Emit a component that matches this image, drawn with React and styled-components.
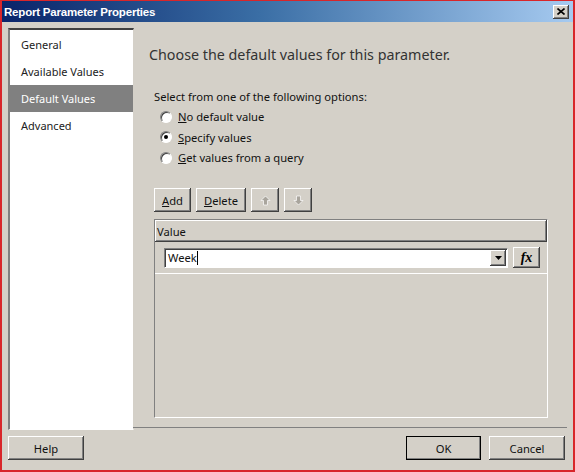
import React from 'react';
import styled, { createGlobalStyle } from 'styled-components';

const Global = createGlobalStyle`
    html, body { margin: 0; padding: 0; background: #d4d0c8; }
    body { font-family: "Noto Sans", "Open Sans", sans-serif; }
`

const Window = styled.div`
    box-sizing: border-box;
    width: 575px;
    height: 472px;
    border: 1px solid #d8262a;
    border-left-width: 2px;
    border-bottom-width: 2px;
    border-right-width: 2px;
    background: #d4d0c8;
    display: flex;
    flex-direction: column;
    overflow: hidden;
`

const TitleBar = styled.div`
    height: 21px;
    flex: none;
    display: flex;
    align-items: center;
    justify-content: space-between;
    padding: 0 4px 0 2px;
    background: linear-gradient(to right, #0a246a 0%, #3a6ea5 45%, #a6caf0 100%);
    color: #fff;
    font-family: "Liberation Sans", Arial, sans-serif;
    font-weight: bold;
    font-size: 11.5px;
    letter-spacing: -0.2px;
`

const CloseButton = styled.div`
    width: 16px;
    height: 14px;
    background: #d4d0c8;
    box-shadow: inset -1px -1px #404040, inset 1px 1px #fff, inset -2px -2px #808080;
    display: flex;
    align-items: center;
    justify-content: center;
    color: #000;
`

const Main = styled.div`
    flex: 1;
    display: flex;
    padding: 6px 6px 0 6px;
    min-height: 0;
`

const Sidebar = styled.div`
    width: 126px;
    flex: none;
    background: #fff;
    box-sizing: border-box;
    border-top: 2px solid #404040;
    border-left: 2px solid #808080;
    border-right: 1px solid #d4d0c8;
    border-bottom: 1px solid #fff;
    padding-top: 1px;
    height: 402px;
`

const NavItem = styled.div`
    height: 27px;
    line-height: 27px;
    padding-left: 11px;
    font-size: 11px;
    color: ${p => (p.$active ? '#fff' : '#222')};
    background: ${p => (p.$active ? '#808080' : 'transparent')};
`

const Content = styled.div`
    flex: 1;
    display: flex;
    flex-direction: column;
    padding-left: 16px;
    box-sizing: border-box;
    height: 400px;
    border-bottom: 1px solid #808080;
    margin-left: -1px;
`

const Heading = styled.div`
    font-size: 14.3px;
    color: #333;
    margin-top: 17px;
`

const Instruction = styled.div`
    font-size: 11.2px;
    color: #111;
    margin: 25px 0 0 5px;
`

const Options = styled.div`
    display: flex;
    flex-direction: column;
    gap: 3.5px;
    margin: 4px 0 0 11px;
`

const OptionRow = styled.label`
    display: flex;
    align-items: center;
    gap: 6px;
    font-size: 11.2px;
    color: #111;
    height: 17px;
`

const Radio = styled.span`
    width: 12px;
    height: 12px;
    border-radius: 50%;
    box-sizing: border-box;
    background: #fff;
    border: 1px solid;
    border-color: #808080 #fff #fff #808080;
    box-shadow: inset 1px 1px #404040;
    display: flex;
    align-items: center;
    justify-content: center;
    &::after {
        content: '';
        width: 4px;
        height: 4px;
        border-radius: 50%;
        background: ${p => (p.$checked ? '#000' : 'transparent')};
    }
`

const Toolbar = styled.div`
    display: flex;
    gap: 5px;
    margin: 22px 0 0 5px;
`

const Button = styled.button`
    box-sizing: border-box;
    height: ${p => p.$h || 24}px;
    width: ${p => p.$w}px;
    padding: 0;
    font-family: inherit;
    font-size: 11.2px;
    color: #111;
    background: #d4d0c8;
    border: none;
    outline: ${p => (p.$default ? '1px solid #000' : 'none')};
    outline-offset: -1px;
    box-shadow: inset -1px -1px #404040, inset 1px 1px #fff, inset -2px -2px #808080, inset 2px 2px #d4d0c8;
    display: flex;
    align-items: center;
    justify-content: center;
    u { text-decoration: underline; }
`

const Grid = styled.div`
    margin: 7px 0 0 5px;
    width: 394px;
    height: 199px;
    box-sizing: border-box;
    border: 1px solid;
    border-color: #808080 #fff #fff #808080;
    background: #d4d0c8;
`

const GridHeader = styled.div`
    height: 22px;
    box-sizing: border-box;
    padding-left: 2px;
    display: flex;
    align-items: center;
    font-size: 11.2px;
    color: #111;
    box-shadow: inset -1px -1px #404040, inset 1px 1px #fff, inset -2px -2px #808080;
`

const GridRow = styled.div`
    height: 32px;
    display: flex;
    align-items: center;
    gap: 5px;
    padding-left: 9px;
    border-bottom: 1px solid #fff;
    box-sizing: border-box;
`

const Combo = styled.div`
    width: 344px;
    height: 20px;
    box-sizing: border-box;
    background: #fff;
    border: 1px solid;
    border-color: #808080 #fff #fff #808080;
    box-shadow: inset 1px 1px #404040;
    display: flex;
    align-items: stretch;
    font-size: 11.2px;
    color: #111;
`

const ComboText = styled.div`
    flex: 1;
    display: flex;
    align-items: center;
    padding-left: 3px;
    span { border-right: 1px solid #000; line-height: 14px; }
`

const DropButton = styled.div`
    width: 16px;
    margin: 1px 1px 1px 0;
    background: #d4d0c8;
    box-shadow: inset -1px -1px #404040, inset 1px 1px #fff, inset -2px -2px #808080;
    display: flex;
    align-items: center;
    justify-content: center;
`

const FxLabel = styled.span`
    font-family: "Liberation Serif", serif;
    font-style: italic;
    font-weight: bold;
    font-size: 14px;
    color: #000;
`

const Footer = styled.div`
    display: flex;
    align-items: center;
    padding: 6px 8px 0 6px;
    height: 24px;
    margin-bottom: 10px;
`

const Spacer = styled.div`
    flex: 1;
`

const ArrowIcon = ({ down }) => (
    <svg width="11" height="11" viewBox="0 0 11 11" style={{ transform: down ? 'rotate(180deg)' : 'none' }}>
        <path d="M5.5 1 L10 5.5 L7.5 5.5 L7.5 10 L3.5 10 L3.5 5.5 L1 5.5 Z" fill="#a9a59d" stroke="#fff" strokeWidth="0.7" />
    </svg>
)

const App = () => (
    <>
        <Global />
        <Window>
            <TitleBar>
                <span>Report Parameter Properties</span>
                <CloseButton>
                    <svg width="8" height="7" viewBox="0 0 8 7">
                        <path d="M0.5 0.5 L7.5 6.5 M7.5 0.5 L0.5 6.5" stroke="#000" strokeWidth="1.6" />
                    </svg>
                </CloseButton>
            </TitleBar>
            <Main>
                <Sidebar>
                    <NavItem>General</NavItem>
                    <NavItem>Available Values</NavItem>
                    <NavItem $active>Default Values</NavItem>
                    <NavItem>Advanced</NavItem>
                </Sidebar>
                <Content>
                    <Heading>Choose the default values for this parameter.</Heading>
                    <Instruction>Select from one of the following options:</Instruction>
                    <Options>
                        <OptionRow><Radio /><span><u>N</u>o default value</span></OptionRow>
                        <OptionRow><Radio $checked /><span><u>S</u>pecify values</span></OptionRow>
                        <OptionRow><Radio /><span><u>G</u>et values from a query</span></OptionRow>
                    </Options>
                    <Toolbar>
                        <Button $w={37}><span><u>A</u>dd</span></Button>
                        <Button $w={50}><span><u>D</u>elete</span></Button>
                        <Button $w={28}><ArrowIcon /></Button>
                        <Button $w={28}><ArrowIcon down /></Button>
                    </Toolbar>
                    <Grid>
                        <GridHeader>Value</GridHeader>
                        <GridRow>
                            <Combo>
                                <ComboText><span>Week</span></ComboText>
                                <DropButton>
                                    <svg width="7" height="4" viewBox="0 0 7 4"><path d="M0 0 H7 L3.5 4 Z" fill="#000" /></svg>
                                </DropButton>
                            </Combo>
                            <Button $w={27} $h={21}><FxLabel>fx</FxLabel></Button>
                        </GridRow>
                    </Grid>
                </Content>
            </Main>
            <Footer>
                <Button $w={76}>Help</Button>
                <Spacer />
                <Button $w={75} $default>OK</Button>
                <Button $w={76} style={{ marginLeft: 8 }}>Cancel</Button>
            </Footer>
        </Window>
    </>
)

export default App
